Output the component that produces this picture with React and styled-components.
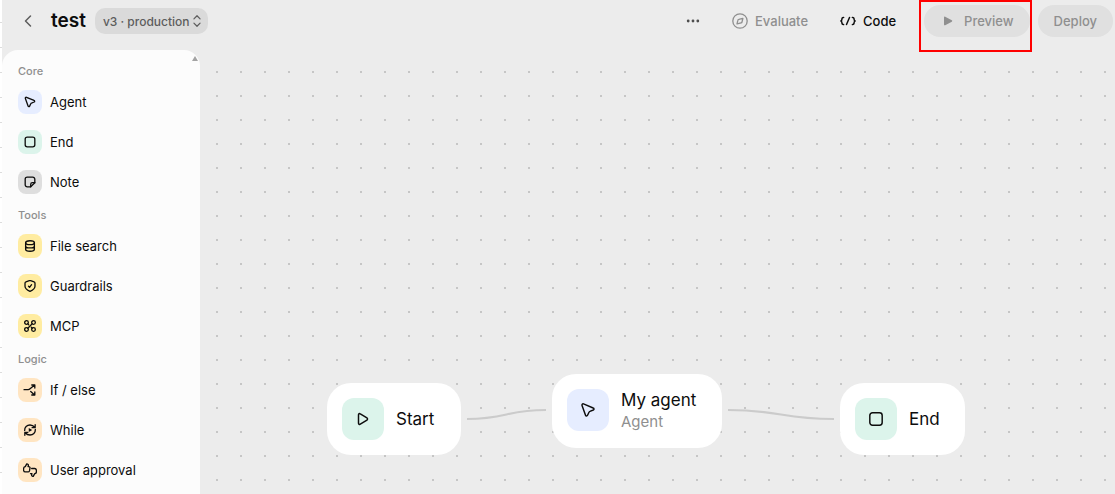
import styled, { createGlobalStyle } from "styled-components";

const GlobalStyle = createGlobalStyle`
  * {
    box-sizing: border-box;
  }
  body {
    margin: 0;
    font-family: Inter, "Liberation Sans", sans-serif;
    color: #0d0d0d;
  }
  button {
    font: inherit;
    color: inherit;
    border: 0;
    background: none;
    padding: 0;
  }
`;

const icons = {
  back: <path d="M10.5 3 5.5 8l5 5" />,
  updown: <path d="m4.5 5.5 3.5-3.5 3.5 3.5M4.5 10.5 8 14l3.5-3.5" />,
  more: (
    <g fill="currentColor" stroke="none">
      <circle cx="2.5" cy="8" r="1.6" />
      <circle cx="8" cy="8" r="1.6" />
      <circle cx="13.5" cy="8" r="1.6" />
    </g>
  ),
  compass: (
    <>
      <circle cx="8" cy="8" r="7.2" />
      <path d="M5.9 7.2c.1-.5.4-.8.9-.9l4.1-1-.9 3.700c-.1.500-.4.800-.9.900l-4.100 1z" />
    </>
  ),
  code: (
    <path d="M3.600 4.400 2.700 4.700c-.6.300-.8.900-.8 1.600 0 .8-.3 1.400-1 1.700.7.300 1 .9 1 1.700 0 .7.200 1.300.8 1.600l.9.300M12.400 4.400l.9.300c.6.300.8.900.8 1.600 0 .8.300 1.400 1 1.700-.7.300-1 .9-1 1.700 0 .7-.2 1.300-.8 1.600l-.9.300M9.500 4.500l-3 7" />
  ),
  playSolid: (
    <path d="M4 4.400v7.200c0 .7.600 1 1.200.7l6.600-3.600c.6-.3.6-1.100 0-1.400L5.200 3.700C4.600 3.400 4 3.700 4 4.400z" fill="currentColor" stroke="none" />
  ),
  cursor: (
    <path d="M2.700 3.900 5.800 12.600c.3.900 1.400.9 1.800.1l1.400-2.900c.1-.3.400-.5.700-.6l3-1.200c.9-.4.8-1.500-.1-1.800L4 2.600c-.9-.3-1.600.5-1.300 1.300z" />
  ),
  square: <rect x="2.500" y="2.500" width="11" height="11" rx="2.400" />,
  note: (
    <>
      <path d="M8.800 13.500H4.900a2.400 2.400 0 0 1-2.400-2.400V4.900a2.400 2.400 0 0 1 2.400-2.400h6.200a2.400 2.400 0 0 1 2.400 2.400v3.900z" />
      <path d="M8.800 13.500v-2.700a2 2 0 0 1 2-2h2.700" />
    </>
  ),
  database: (
    <>
      <ellipse cx="8" cy="4.200" rx="5" ry="2.200" />
      <path d="M3 4.200v7.600c0 1.200 2.200 2.200 5 2.200s5-1 5-2.200V4.200M3 8c0 1.200 2.200 2.200 5 2.200s5-1 5-2.200" />
    </>
  ),
  shield: (
    <>
      <path d="M7.300 1.900 3.300 3.400c-.6.200-1 .8-1 1.400v3.400c0 2.500 1.900 4.200 5.700 6 3.800-1.800 5.700-3.500 5.700-6V4.800c0-.6-.4-1.200-1-1.400L8.700 1.900a2 2 0 0 0-1.400 0z" />
      <path d="m6.300 8.300 1.200 1.200 2.300-3" />
    </>
  ),
  mcp: (
    <>
      <circle cx="4" cy="4" r="2.100" />
      <circle cx="12" cy="4" r="2.100" />
      <circle cx="4" cy="12" r="2.100" />
      <circle cx="12" cy="12" r="2.100" />
      <path d="m5.500 10.500 5-5M5.500 5.500l1 1M9.500 9.500l1 1" />
    </>
  ),
  branch: (
    <path d="M1.200 7.600h4.600c1.200 0 1.800-.6 2.600-1.400L13 2.600M10 2.300h3.500v3.500M8.800 9.700l4.200 3.700M13.500 10.200v3.500H10" />
  ),
  loop: (
    <>
      <path d="M1.900 8.600C1.700 4.900 4.500 2.300 8 2.300c2.200 0 4 .9 5.400 2.600M13.900 1.900v3.400h-3.500" />
      <path d="M14.100 7.400c.2 3.700-2.600 6.300-6.100 6.300-2.200 0-4-.9-5.400-2.600M2.100 14.100v-3.400h3.500" />
      <path d="M6.600 5.700v4.600L10.500 8z" fill="currentColor" stroke="none" />
    </>
  ),
  thumbs: (
    <>
      <path d="M2.600 4.200 4.300 1c1.400 0 2 .9 1.800 1.900l-.3 1.300h.9c.9 0 1.500.7 1.300 1.500l-.6 3.300c-.2.700-.7 1.200-1.500 1.200H2.600C1.200 10.200.6 9.300.6 7.300s.6-3.100 2-3.100z" />
      <path d="M9.900 6.300h3.500c1.400 0 2 .9 2 2.900s-.6 3-2 3L11.700 15.300c-1.400 0-2-.9-1.800-1.900l.3-1.200H8.600" />
    </>
  ),
  play: (
    <path d="M4 4.300v7.400c0 .9.900 1.400 1.600.9l5.900-3.700c.7-.4.700-1.400 0-1.800L5.600 3.400C4.900 2.900 4 3.400 4 4.300z" />
  ),
};

function Icon({ name, size = 16, weight = 1.3 }) {
  return (
    <svg
      width={size}
      height={size}
      viewBox="0 0 16 16"
      fill="none"
      stroke="currentColor"
      strokeWidth={weight}
      strokeLinecap="round"
      strokeLinejoin="round"
      aria-hidden="true"
    >
      {icons[name]}
    </svg>
  );
}

const tints = {
  blue: "#e6edff",
  green: "#dcf4eb",
  grey: "#dedede",
  yellow: "#ffeca1",
  orange: "#ffe5c2",
};

const groups = [
  {
    title: "Core",
    items: [
      { label: "Agent", icon: "cursor", tint: "blue" },
      { label: "End", icon: "square", tint: "green" },
      { label: "Note", icon: "note", tint: "grey" },
    ],
  },
  {
    title: "Tools",
    items: [
      { label: "File search", icon: "database", tint: "yellow" },
      { label: "Guardrails", icon: "shield", tint: "yellow" },
      { label: "MCP", icon: "mcp", tint: "yellow" },
    ],
  },
  {
    title: "Logic",
    items: [
      { label: "If / else", icon: "branch", tint: "orange" },
      { label: "While", icon: "loop", tint: "orange" },
      { label: "User approval", icon: "thumbs", tint: "orange" },
    ],
  },
];

const nodes = [
  { x: 127, y: 333, w: 134, title: "Start", icon: "play", tint: "green" },
  { x: 352, y: 324, w: 170, title: "My agent", type: "Agent", icon: "cursor", tint: "blue" },
  { x: 640, y: 333, w: 125, title: "End", icon: "square", tint: "green" },
];

const edges = [
  [267, 369, 346, 360],
  [528, 360, 634, 369],
];

export default function App() {
  return (
    <Page>
      <GlobalStyle />
      <Shell>
        <Header>
          <BackButton aria-label="Back">
            <Icon name="back" weight={1.5} />
          </BackButton>
          <Title>test</Title>
          <Version>
            v3 · production
            <Icon name="updown" size={14} weight={1.4} />
          </Version>
          <Actions>
            <MoreButton aria-label="More">
              <Icon name="more" size={14} />
            </MoreButton>
            <TextButton disabled>
              <Icon name="compass" />
              Evaluate
            </TextButton>
            <TextButton>
              <Icon name="code" weight={1.5} />
              Code
            </TextButton>
          </Actions>
          <Pills>
            <Highlight>
              <Pill disabled>
                <Icon name="playSolid" />
                Preview
              </Pill>
            </Highlight>
            <Pill disabled>Deploy</Pill>
          </Pills>
        </Header>
        <Body>
          <Sidebar>
            <ScrollArrow viewBox="0 0 6 5" aria-hidden="true">
              <path d="M3 0 6 5H0z" />
            </ScrollArrow>
            {groups.map((group) => (
              <section key={group.title}>
                <GroupTitle>{group.title}</GroupTitle>
                {group.items.map((item) => (
                  <Item key={item.label}>
                    <Swatch $tint={item.tint}>
                      <Icon name={item.icon} size={14} weight={1.5} />
                    </Swatch>
                    {item.label}
                  </Item>
                ))}
              </section>
            ))}
          </Sidebar>
          <Canvas>
            <Edges>
              {edges.map(([x1, y1, x2, y2]) => {
                const mid = (x1 + x2) / 2;
                return (
                  <path
                    key={x1}
                    d={`M${x1} ${y1}C${mid} ${y1} ${mid} ${y2} ${x2} ${y2}`}
                  />
                );
              })}
            </Edges>
            {nodes.map((node) => (
              <Node key={node.title} style={{ left: node.x, top: node.y, width: node.w }}>
                <Swatch $tint={node.tint} $large>
                  <Icon name={node.icon} size={18} weight={1.3} />
                </Swatch>
                <NodeText>
                  <NodeTitle>{node.title}</NodeTitle>
                  {node.type && <NodeType>{node.type}</NodeType>}
                </NodeText>
              </Node>
            ))}
          </Canvas>
        </Body>
      </Shell>
    </Page>
  );
}

const Page = styled.div`
  min-height: 100vh;
  padding-left: 2px;
  display: flex;
  background: repeating-linear-gradient(
    #fff 0 22px,
    #dcdcdc 22px 23px,
    #fff 23px 25px
  );
`;

const Shell = styled.div`
  flex: 1;
  min-width: 0;
  display: flex;
  flex-direction: column;
  background: #ececec;
`;

const Header = styled.header`
  height: 50px;
  padding: 0 2px 8px 18px;
  display: flex;
  align-items: center;
`;

const BackButton = styled.button`
  display: flex;
  color: #5d5d5d;
`;

const Title = styled.h1`
  margin: 0 9px 0 15px;
  font-size: 19px;
  line-height: 24px;
  font-weight: 600;
`;

const Version = styled.button`
  height: 26px;
  padding: 0 4px 0 8px;
  display: flex;
  align-items: center;
  border-radius: 10px;
  background: #dadada;
  color: #5d5d5d;
  font-size: 12px;
  font-weight: 500;
`;

const Actions = styled.div`
  margin: 0 28px 0 auto;
  display: flex;
  align-items: center;
  gap: 32px;
`;

const MoreButton = styled.button`
  display: flex;
  color: #4d4d4d;
`;

const TextButton = styled.button`
  display: flex;
  align-items: center;
  gap: 7px;
  font-size: 13px;
  font-weight: 500;

  &:disabled {
    color: #8f8f8f;
  }
`;

const Pills = styled.div`
  display: flex;
  gap: 8px;
`;

const Pill = styled.button`
  height: 32px;
  padding: 0 16px;
  display: flex;
  align-items: center;
  gap: 8px;
  border-radius: 16px;
  background: #e0e0e0;
  color: #8f8f8f;
  font-size: 13px;
  font-weight: 500;
`;

const Highlight = styled.div`
  position: relative;

  &::after {
    content: "";
    position: absolute;
    inset: -5px -2px -15px -5px;
    border: 2px solid #f00;
    pointer-events: none;
  }
`;

const Body = styled.div`
  flex: 1;
  display: flex;
`;

const Sidebar = styled.aside`
  position: relative;
  width: 198px;
  padding: 8px 16px 4px;
  border-radius: 16px 16px 0 0;
  background: #fcfcfc;
`;

const ScrollArrow = styled.svg`
  position: absolute;
  top: 6px;
  right: 2px;
  width: 6px;
  height: 5px;
  fill: #a3a3a3;
`;

const GroupTitle = styled.h2`
  margin: 0;
  padding-top: 2px;
  font-size: 11px;
  line-height: 22px;
  font-weight: 500;
  color: #8f8f8f;
`;

const Item = styled.button`
  width: 100%;
  height: 40px;
  display: flex;
  align-items: center;
  gap: 8px;
  font-size: 13px;
`;

const Swatch = styled.span`
  flex: none;
  width: ${({ $large }) => ($large ? 42 : 24)}px;
  height: ${({ $large }) => ($large ? 42 : 24)}px;
  display: flex;
  align-items: center;
  justify-content: center;
  border-radius: ${({ $large }) => ($large ? 12 : 8)}px;
  background: ${({ $tint }) => tints[$tint]};
`;

const Canvas = styled.main`
  position: relative;
  flex: 1;
  overflow: hidden;
  background-image: conic-gradient(
    at 2px 2px,
    transparent 75%,
    #c6c6c6 0
  );
  background-size: 24px 24px;
  background-position: 16px 21px;
`;

const Edges = styled.svg`
  position: absolute;
  inset: 0;
  width: 100%;
  height: 100%;
  fill: none;
  stroke: #cbcbcb;
  stroke-width: 2.2;
`;

const Node = styled.div`
  position: absolute;
  padding: 15px;
  display: flex;
  align-items: flex-start;
  gap: 12px;
  border-radius: 24px;
  background: #fff;
  white-space: nowrap;
`;

const NodeText = styled.div`
  min-height: 42px;
  display: flex;
  flex-direction: column;
  justify-content: center;
`;

const NodeTitle = styled.div`
  font-size: 17px;
  line-height: 22px;
`;

const NodeType = styled.div`
  font-size: 15px;
  line-height: 22px;
  color: #8f8f8f;
`;
